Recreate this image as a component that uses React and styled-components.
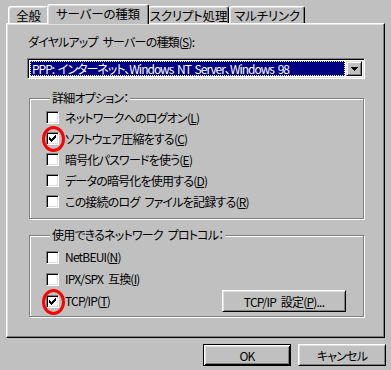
import React from "react";
import styled, { createGlobalStyle } from "styled-components";

const GlobalStyle = createGlobalStyle`
  html, body {
    margin: 0;
    background: #c0c0c0;
  }
  body {
    font-family: "Noto Sans CJK JP", "Noto Sans", sans-serif;
    font-size: 12px;
    font-feature-settings: "palt";
    letter-spacing: -0.8px;
    word-spacing: 3px;
    color: #000;
  }
`;

const Window = styled.div`
  width: 391px;
  height: 370px;
  box-sizing: border-box;
  padding: 0 5px 0 6px;
  background: #c0c0c0;
  overflow: hidden;
`;

const TabStrip = styled.div`
  display: flex;
  align-items: flex-end;
  height: 23px;
  padding-left: 2px;
`;

const Tab = styled.div`
  position: relative;
  box-sizing: border-box;
  width: ${(p) => p.$w}px;
  height: ${(p) => (p.$active ? 20 : 17)}px;
  margin: ${(p) => (p.$active ? "0 -1px -1px -2px" : "0")};
  z-index: ${(p) => (p.$active ? 2 : 0)};
  display: flex;
  align-items: center;
  justify-content: center;
  background: #c0c0c0;
  border-top: 1px solid #fff;
  border-left: 1px solid #fff;
  border-right: 1px solid #000;
  border-radius: 3px 3px 0 0;
  box-shadow: inset -1px 0 #808080, inset 1px 1px #dfdfdf;
  white-space: nowrap;
  font-size: 12.5px;
  letter-spacing: -0.2px;
  padding-bottom: ${(p) => (p.$active ? 2 : 0)}px;
`;

const Panel = styled.div`
  position: relative;
  z-index: 1;
  box-sizing: border-box;
  width: 379px;
  height: 315px;
  padding: 11px 20px 0 20px;
  border-top: 1px solid #fff;
  border-left: 1px solid #fff;
  border-right: 1px solid #000;
  border-bottom: 1px solid #000;
  box-shadow: inset -1px -1px #808080, inset 1px 1px #dfdfdf;
`;

const FieldLabel = styled.div`
  margin-left: 1px;
  line-height: 14px;
  white-space: nowrap;
`;

const Key = styled.u`
  text-decoration: underline;
  text-underline-offset: 1px;
`;

const Combo = styled.div`
  box-sizing: border-box;
  width: 338px;
  height: 21px;
  margin-top: 9px;
  display: flex;
  padding: 2px;
  background: #fff;
  border: 1px solid;
  border-color: #808080 #fff #fff #808080;
  box-shadow: inset 1px 1px #000, inset -1px -1px #dfdfdf;
`;

const ComboValue = styled.div`
  flex: 1;
  box-sizing: border-box;
  background: #000080;
  color: #fff;
  border: 1px dotted #ffff80;
  padding-left: 1px;
  line-height: 13px;
  letter-spacing: -1px;
  word-spacing: 2px;
  white-space: nowrap;
  overflow: hidden;
  margin-right: 1px;
`;

const ArrowButton = styled.div`
  box-sizing: border-box;
  width: 16px;
  display: flex;
  align-items: center;
  justify-content: center;
  background: #c0c0c0;
  border: 1px solid;
  border-color: #dfdfdf #000 #000 #dfdfdf;
  box-shadow: inset 1px 1px #fff, inset -1px -1px #808080;
`;

const Group = styled.fieldset`
  box-sizing: border-box;
  width: 335px;
  margin: ${(p) => p.$mt}px 0 0 2px;
  padding: ${(p) => p.$pt}px 17px ${(p) => p.$pb}px 16px;
  border: 1px solid #808080;
  box-shadow: inset 1px 1px #fff, 1px 1px #fff;
  min-width: 0;
`;

const Legend = styled.legend`
  padding: 0 2px;
  margin-left: 4px;
  line-height: 14px;
  background: #c0c0c0;
`;

const Row = styled.div`
  display: flex;
  align-items: center;
  justify-content: space-between;
  height: ${(p) => p.$h}px;
`;

const Check = styled.label`
  display: flex;
  align-items: center;
  gap: 6px;
  white-space: nowrap;
  line-height: 14px;
`;

const Box = styled.span`
  position: relative;
  box-sizing: border-box;
  width: 13px;
  height: 13px;
  flex: none;
  display: flex;
  align-items: center;
  justify-content: center;
  background: #fff;
  border: 1px solid;
  border-color: #808080 #fff #fff #808080;
  box-shadow: inset 1px 1px #000, inset -1px -1px #dfdfdf;
`;

const Ring = styled.span`
  position: absolute;
  left: -5px;
  top: -7px;
  width: 17px;
  height: 20px;
  border: 3px solid #ff0000;
  border-radius: 50%;
`;

const Button = styled.button`
  box-sizing: border-box;
  width: ${(p) => p.$w}px;
  height: 22px;
  padding: 0;
  font: inherit;
  letter-spacing: inherit;
  word-spacing: inherit;
  font-feature-settings: inherit;
  color: #000;
  background: #c0c0c0;
  border: 1px solid;
  border-color: ${(p) => (p.$default ? "#000" : "#fff #000 #000 #fff")};
  box-shadow: ${(p) =>
    p.$default
      ? "inset 1px 1px #fff, inset -1px -1px #000, inset 2px 2px #dfdfdf, inset -2px -2px #808080"
      : "inset 1px 1px #dfdfdf, inset -1px -1px #808080"};
  white-space: nowrap;
`;

const ButtonRow = styled.div`
  display: flex;
  justify-content: flex-end;
  gap: 7px;
  margin-top: 6px;
`;

const CheckMark = () => (
  <svg width="7" height="7" viewBox="0 0 7 7" shapeRendering="crispEdges">
    <path
      fill="#000"
      d="M0 2h1v3H0zM1 3h1v3H1zM2 4h1v3H2zM3 3h1v3H3zM4 2h1v3H4zM5 1h1v3H5zM6 0h1v3H6z"
    />
  </svg>
);

const CheckBox = ({ checked, circled, children }) => (
  <Check>
    <Box>
      {checked && <CheckMark />}
      {circled && <Ring />}
    </Box>
    <span>{children}</span>
  </Check>
);

const options = [
  { text: "ネットワークへのログオン", key: "L" },
  { text: "ソフトウェア圧縮をする", key: "C", checked: true },
  { text: "暗号化パスワードを使う", key: "E" },
  { text: "データの暗号化を使用する", key: "D" },
  { text: "この接続のログ ファイルを記録する", key: "R" },
];

export default function App() {
  return (
    <>
      <GlobalStyle />
      <Window>
        <TabStrip>
          <Tab $w={41}>全般</Tab>
          <Tab $w={102} $active>
            サーバーの種類
          </Tab>
          <Tab $w={81}>スクリプト処理</Tab>
          <Tab $w={76}>マルチリンク</Tab>
        </TabStrip>
        <Panel>
          <FieldLabel>
            ダイヤルアップ サーバーの種類(<Key>S</Key>):
          </FieldLabel>
          <Combo>
            <ComboValue>PPP: インターネット、Windows NT Server、Windows 98</ComboValue>
            <ArrowButton>
              <svg width="7" height="4" viewBox="0 0 7 4" shapeRendering="crispEdges">
                <path fill="#000" d="M0 0h7v1H0zM1 1h5v1H1zM2 2h3v1H2zM3 3h1v1H3z" />
              </svg>
            </ArrowButton>
          </Combo>

          <Group $mt={12} $pt={2} $pb={6}>
            <Legend>詳細オプション：</Legend>
            {options.map((o) => (
              <Row key={o.key} $h={21}>
                <CheckBox checked={o.checked} circled={o.checked}>
                  {o.text}(<Key>{o.key}</Key>)
                </CheckBox>
              </Row>
            ))}
          </Group>

          <Group $mt={9} $pt={4} $pb={4}>
            <Legend>使用できるネットワーク プロトコル：</Legend>
            <Row $h={22}>
              <CheckBox>
                NetBEUI(<Key>N</Key>)
              </CheckBox>
            </Row>
            <Row $h={22}>
              <CheckBox>
                IPX/SPX 互換(<Key>I</Key>)
              </CheckBox>
            </Row>
            <Row $h={22}>
              <CheckBox checked circled>
                TCP/IP(<Key>T</Key>)
              </CheckBox>
              <Button $w={124}>
                TCP/IP 設定(<Key>P</Key>)...
              </Button>
            </Row>
          </Group>
        </Panel>
        <ButtonRow>
          <Button $w={88} $default>
            OK
          </Button>
          <Button $w={88}>キャンセル</Button>
        </ButtonRow>
      </Window>
    </>
  );
}
